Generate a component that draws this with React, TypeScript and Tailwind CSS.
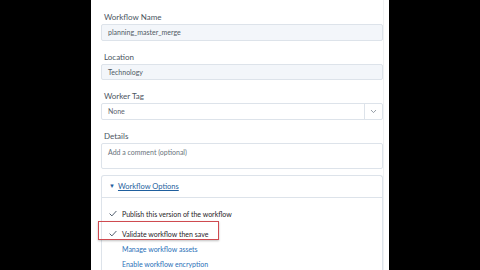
import React from "react";

const font = { fontFamily: 'Lato, "Open Sans", sans-serif' };

function Label({ children }: { children: React.ReactNode }) {
  return <div className="h-[12px] pl-[3px] text-[8px] leading-[12px] text-[#4a5561]">{children}</div>;
}

function Check() {
  return (
    <svg width="8" height="7" viewBox="0 0 8 7" className="shrink-0">
      <polyline points="0.6,3.6 2.9,5.9 7.4,1" fill="none" stroke="#3d4b5c" strokeWidth="0.9" />
    </svg>
  );
}

export default function App() {
  return (
    <div className="w-[480px] h-[270px] bg-black flex overflow-hidden" style={font}>
      <div className="ml-[91px] w-[298px] h-[270px] bg-white flex">
        <div className="flex-1 pl-[10px] flex flex-col">
          <div className="pt-[11px]" />
          <Label>Workflow Name</Label>
          <div className="mt-[1px] h-[17px] rounded-[2px] border border-[#dde3ea] bg-[#f3f6fa] pl-[6px] flex items-center text-[7px] text-[#505a64]">
            planning_master_merge
          </div>
          <div className="mt-[10px]" />
          <Label>Location</Label>
          <div className="mt-[1px] h-[17px] rounded-[2px] border border-[#dde3ea] bg-[#f3f6fa] pl-[6px] flex items-center text-[7px] text-[#505a64]">
            Technology
          </div>
          <div className="mt-[10px]" />
          <Label>Worker Tag</Label>
          <div className="mt-[1px] h-[17px] rounded-[2px] border border-[#dde3ea] bg-white flex items-center text-[7px] text-[#5b646d]">
            <div className="flex-1 pl-[6px]">None</div>
            <div className="w-[18px] h-full border-l border-[#dde3ea] flex items-center justify-center">
              <svg width="7" height="5" viewBox="0 0 7 5">
                <polyline points="1,1 3.5,3.6 6,1" fill="none" stroke="#7b8590" strokeWidth="0.8" />
              </svg>
            </div>
          </div>
          <div className="mt-[10px]" />
          <Label>Details</Label>
          <div className="mt-[1px] h-[27px] rounded-[2px] border border-[#dde3ea] bg-white pl-[6px] pt-[3px] text-[7px] leading-[10px] text-[#6a737c]">
            Add a comment (optional)
          </div>
          <div className="mt-[6px] flex-1 rounded-t-[3px] border border-b-0 border-[#dde3ea] relative">
            <div className="h-[22px] border-b border-[#dde3ea] flex items-center pl-[7px] gap-[3px]">
              <span className="text-[6px] text-[#1f5f9e] leading-none">▼</span>
              <span className="text-[7.5px] text-[#1f5f9e] underline">Workflow Options</span>
            </div>
            <div className="pl-[7px] pt-[10px] flex flex-col">
              <div className="h-[12px] flex items-center gap-[5px] text-[7px] text-[#1f2328]">
                <Check />
                <span>Publish this version of the workflow</span>
              </div>
              <div className="mt-[8px] h-[12px] flex items-center gap-[5px] text-[7px] text-[#1f2328]">
                <Check />
                <span>Validate workflow then save</span>
              </div>
              <div className="mt-[3px] h-[12px] flex items-center pl-[13px] text-[7px] text-[#2a70b8]">
                Manage workflow assets
              </div>
              <div className="mt-[3px] h-[12px] flex items-center pl-[13px] text-[7px] text-[#2a70b8]">
                Enable workflow encryption
              </div>
            </div>
            <div className="absolute left-[-4px] top-[45px] w-[121px] h-[19px] border-[1.5px] border-[#cf4a50] shadow-[0_1px_2px_rgba(0,0,0,0.25)]" />
          </div>
        </div>
        <div className="w-[6px] border-l border-[#f0f2f4]" />
      </div>
    </div>
  );
}
